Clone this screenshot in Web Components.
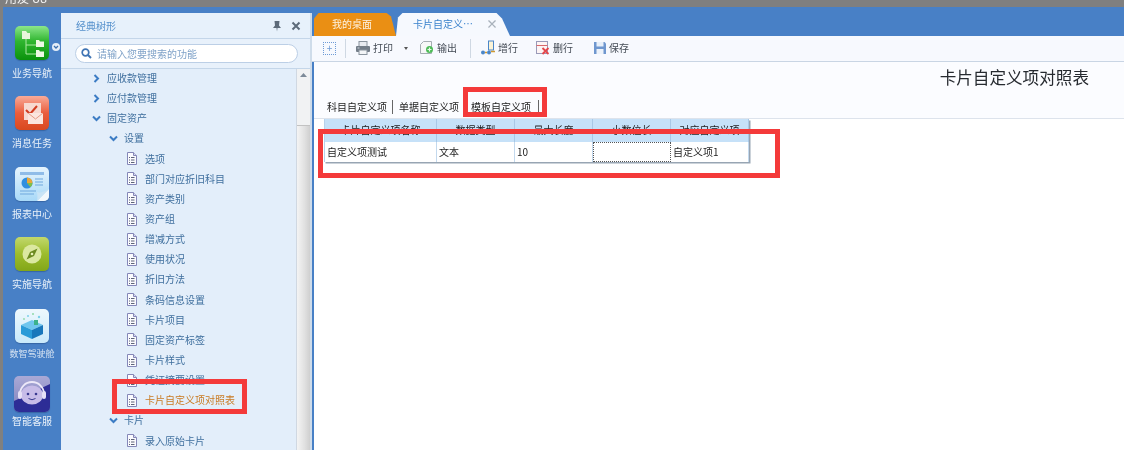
<!DOCTYPE html>
<html lang="zh">
<head>
<meta charset="utf-8">
<title>卡片自定义项对照表</title>
<style>
  html, body { margin: 0; height: 100%; overflow: hidden; background: #808080; }
</style>
</head>
<body>
<u8-shell>
  <u8-rail slot="rail">
    <rail-item icon="nav" drop>业务导航</rail-item>
    <rail-item icon="msg">消息任务</rail-item>
    <rail-item icon="report">报表中心</rail-item>
    <rail-item icon="compass">实施导航</rail-item>
    <rail-item icon="cube" small style="padding-top:2px;box-sizing:border-box">数智驾驶舱</rail-item>
    <rail-item icon="service" style="margin-top:-1.500px">智能客服</rail-item>
  </u8-rail>
  <tree-panel slot="tree">
    <tree-row level="1" kind="closed">应收款管理</tree-row>
    <tree-row level="1" kind="closed">应付款管理</tree-row>
    <tree-row level="1" kind="open">固定资产</tree-row>
    <tree-row level="2" kind="open">设置</tree-row>
    <tree-row level="3" kind="doc">选项</tree-row>
    <tree-row level="3" kind="doc">部门对应折旧科目</tree-row>
    <tree-row level="3" kind="doc">资产类别</tree-row>
    <tree-row level="3" kind="doc">资产组</tree-row>
    <tree-row level="3" kind="doc">增减方式</tree-row>
    <tree-row level="3" kind="doc">使用状况</tree-row>
    <tree-row level="3" kind="doc">折旧方法</tree-row>
    <tree-row level="3" kind="doc">条码信息设置</tree-row>
    <tree-row level="3" kind="doc">卡片项目</tree-row>
    <tree-row level="3" kind="doc">固定资产标签</tree-row>
    <tree-row level="3" kind="doc">卡片样式</tree-row>
    <tree-row level="3" kind="doc">凭证摘要设置</tree-row>
    <tree-row level="3" kind="doc" active>卡片自定义项对照表</tree-row>
    <tree-row level="2" kind="open">卡片</tree-row>
    <tree-row level="3" kind="doc">录入原始卡片</tree-row>
  </tree-panel>
  <main-pane slot="main"></main-pane>
</u8-shell>
<red-mark style="left:112px;top:379px;width:135px;height:35px"></red-mark>
<red-mark style="left:463px;top:87px;width:84px;height:30px"></red-mark>
<red-mark style="left:318px;top:129px;width:462px;height:49px"></red-mark>

<script>
const FONT = '"Noto Sans CJK SC", "Noto Sans", sans-serif';

const RAIL_ICONS = {
  nav: `<svg viewBox="0 0 34 34" width="34" height="34">
    <defs><linearGradient id="g" x1="0" y1="0" x2="0" y2="1"><stop offset="0" stop-color="#8ce68a"/><stop offset=".45" stop-color="#2fb52f"/><stop offset="1" stop-color="#0a920c"/></linearGradient></defs>
    <rect width="34" height="34" rx="5" fill="url(#g)"/>
    <path d="M11 12v16h10M11 19h10" fill="none" stroke="#a9e8a0" stroke-width="1"/>
    <path d="M7 5h4l1.500 2H15v6H7z" fill="#e8f6dc"/>
    <path d="M21 14h3l1 1.500h4V21h-8z" fill="#eef8e4"/>
    <path d="M21 24h3l1 1.500h4V31h-8z" fill="#eef8e4"/>
  </svg>`,
  msg: `<svg viewBox="0 0 34 34" width="34" height="34">
    <defs><linearGradient id="g" x1="0" y1="0" x2="0" y2="1"><stop offset="0" stop-color="#f9ab98"/><stop offset=".5" stop-color="#ea5d3d"/><stop offset="1" stop-color="#d9481f"/></linearGradient></defs>
    <rect width="34" height="34" rx="5" fill="url(#g)"/>
    <rect x="9" y="7" width="17" height="17" fill="#f7d9d0"/>
    <path d="M11 14l4 4 7-8" fill="none" stroke="#d23c20" stroke-width="2"/>
    <rect x="13" y="17" width="15" height="11" fill="#fbe6de"/>
    <path d="M13 17l7.500 6 7.500-6" fill="none" stroke="#e59c86" stroke-width="1"/>
  </svg>`,
  report: `<svg viewBox="0 0 34 34" width="34" height="34">
    <defs><linearGradient id="g" x1="0" y1="0" x2="0" y2="1"><stop offset="0" stop-color="#e6f4fd"/><stop offset="1" stop-color="#a8d9f8"/></linearGradient></defs>
    <rect width="34" height="34" rx="5" fill="url(#g)"/>
    <rect x="5" y="5" width="24" height="3" fill="#8fbce8"/>
    <circle cx="12" cy="16" r="5.500" fill="#2f8fe0"/>
    <path d="M12 16v-5.500a5.500 5.500 0 0 1 5.500 5.500z" fill="#e9a63a"/>
    <path d="M12 16h5.500a5.500 5.500 0 0 1-2 4.200z" fill="#7fbf4a"/>
    <path d="M20 12h8M20 15h8M20 18h8M5 24h16M5 27h14" stroke="#6ea8de" stroke-width="1.200"/>
    <path d="M22 34l12-12v7a5 5 0 0 1-5 5z" fill="#f2f8fc"/>
    <path d="M22 34c1-5 0-7 0-9 3 1 7 0 12-3z" fill="#c9e4f6"/>
  </svg>`,
  compass: `<svg viewBox="0 0 34 34" width="34" height="34">
    <defs><linearGradient id="g" x1="0" y1="0" x2="0" y2="1"><stop offset="0" stop-color="#c2d86c"/><stop offset=".5" stop-color="#9cbc2c"/><stop offset="1" stop-color="#82a618"/></linearGradient></defs>
    <rect width="34" height="34" rx="5" fill="url(#g)"/>
    <circle cx="17" cy="17" r="9.500" fill="#dbe8a0"/>
    <path d="M22.500 11.500l-3.500 7.500-7.500 3.500 3.500-7.500z" fill="#6c8a20"/>
    <circle cx="17" cy="17" r="1.300" fill="#e8f2b8"/>
  </svg>`,
  cube: `<svg viewBox="0 0 34 34" width="34" height="34">
    <defs><linearGradient id="g" x1="0" y1="0" x2="0" y2="1"><stop offset="0" stop-color="#eef8fd"/><stop offset="1" stop-color="#c9e9fa"/></linearGradient></defs>
    <rect width="34" height="34" rx="5" fill="url(#g)"/>
    <path d="M6 16l11-5 11 5-11 5z" fill="#6fc6ee"/>
    <path d="M6 16v9l11 5v-9z" fill="#2a9bd8"/>
    <path d="M28 16v9l-11 5v-9z" fill="#1877bb"/>
    <rect x="19" y="11" width="4" height="5" fill="#3cb28c"/>
    <circle cx="13" cy="7" r="1" fill="#7ccfe8"/><circle cx="18" cy="5" r="1" fill="#8fd8a8"/>
    <circle cx="24" cy="8" r="1.200" fill="#7ccfe8"/><circle cx="9" cy="10" r=".9" fill="#8fd8a8"/>
  </svg>`,
  service: `<svg viewBox="0 0 36 36" width="36" height="36">
    <defs><linearGradient id="g" x1="0" y1="0" x2="0" y2="1"><stop offset="0" stop-color="#a9a9d6"/><stop offset="1" stop-color="#8080bc"/></linearGradient></defs>
    <rect width="36" height="36" rx="5" fill="url(#g)"/>
    <path d="M0 25L36 8v23a5 5 0 0 1-5 5H5a5 5 0 0 1-5-5z" fill="#2d2d96"/>
    <ellipse cx="18" cy="19" rx="11" ry="9.500" fill="#c7bce8"/>
    <path d="M6 18a12 12 0 0 1 24 0" fill="none" stroke="#ece8f8" stroke-width="1.800"/>
    <rect x="4" y="15" width="4" height="8" rx="2" fill="#e6e0f6"/><rect x="28" y="15" width="4" height="8" rx="2" fill="#e6e0f6"/>
    <circle cx="14" cy="18" r="1.300" fill="#3a3a90"/><circle cx="22" cy="18" r="1.300" fill="#3a3a90"/>
    <path d="M14.500 22.500q3.500 2.500 7 0" fill="none" stroke="#3a3a90" stroke-width="1"/>
  </svg>`
};

const TOOL_ICONS = {
  print: `<svg viewBox="0 0 16 16" width="16" height="16"><rect x="4" y="1.500" width="8" height="5" fill="#e8ebf0" stroke="#8a949e"/><rect x="1" y="6" width="14" height="6" rx="1" fill="#737d88"/><rect x="4" y="10" width="8" height="4.500" fill="#f3f5f7" stroke="#8a949e"/><path d="M2.500 8h2" stroke="#d3dae0"/></svg>`,
  out: `<svg viewBox="0 0 16 16" width="16" height="16"><path d="M4.500 1.500h8v12h-11v-9z" fill="#f7f8f8" stroke="#a5adb2"/><circle cx="10.500" cy="9.500" r="3.500" fill="#4dbb57"/><path d="M8.500 9.500h4M10.500 7.500v4" stroke="#e9f9e9" stroke-width="1.200"/></svg>`,
  add: `<svg viewBox="0 0 16 16" width="16" height="16"><rect x="8.500" y="1" width="5" height="9" fill="#fbf3d6" stroke="#4a86c8"/><circle cx="3" cy="12.500" r="2" fill="#4a86c8"/><circle cx="9" cy="12.500" r="2" fill="#4a86c8"/><path d="M5 12.500h2M11 11.500h4" stroke="#d09a32" stroke-width="1.300"/></svg>`,
  del: `<svg viewBox="0 0 16 16" width="16" height="16"><rect x="1.500" y="1.500" width="11" height="12" fill="#fdf4f4" stroke="#9a9ab8"/><path d="M1.500 5.500h11" stroke="#d9686a"/><path d="M7.500 8l6 6M13.500 8l-6 6" stroke="#e4464a" stroke-width="1.800"/></svg>`,
  save: `<svg viewBox="0 0 14 14" width="14" height="14"><path d="M1 1h10.500L13 2.500V13H1z" fill="#6f97cf"/><rect x="3.500" y="1" width="7" height="4.500" fill="#e8f0fa"/><rect x="3.500" y="8" width="7" height="5" fill="#eef3fa"/></svg>`
};

class U8Shell extends HTMLElement {
    connectedCallback() {
        this.attachShadow({ mode: 'open' });
        this.shadowRoot.innerHTML = `
            <style>
                :host {
                    display: flex;
                    flex-direction: column;
                    width: 1124px;
                    height: 450px;
                    overflow: hidden;
                    font: 10px/14px ${FONT};
                    filter: blur(0.35px);
                }
                .top {
                    height: 6.500px;
                    flex: none;
                    overflow: hidden;
                    background: #7f7f7f;
                    color: #f4f4f4;
                    font-size: 12px;
                    line-height: 14px;
                    padding-left: 5px;
                }
                .top span { display: block; margin-top: -9px; }
                .body {
                    flex: 1;
                    min-height: 0;
                    display: flex;
                    margin-left: 3px;
                    background: #4880c6;
                }
            </style>
            <div class="top"><span>用友 U8</span></div>
            <div class="body">
                <slot name="rail"></slot>
                <slot name="tree"></slot>
                <slot name="main"></slot>
            </div>
        `;
    }
}

class U8Rail extends HTMLElement {
    connectedCallback() {
        this.attachShadow({ mode: 'open' });
        this.shadowRoot.innerHTML = `
            <style>
                :host {
                    display: flex;
                    flex-direction: column;
                    flex: none;
                    width: 58px;
                    padding-top: 19.500px;
                    box-sizing: border-box;
                }
            </style>
            <slot></slot>
        `;
    }
}

class RailItem extends HTMLElement {
    connectedCallback() {
        const icon = this.getAttribute('icon');
        const small = this.hasAttribute('small');
        const drop = this.hasAttribute('drop');
        const labelGap = icon === 'service' ? 2 : small ? 4 : 6;
        this.attachShadow({ mode: 'open' });
        this.shadowRoot.innerHTML = `
            <style>
                :host {
                    display: flex;
                    flex-direction: column;
                    align-items: center;
                    position: relative;
                    height: 70.300px;
                    color: ${small ? '#d5e2f2' : '#e8f0f9'};
                    font-size: ${small ? '9px' : '10px'};
                }
                .ico { display: block; border-radius: 5px; box-shadow: 0 1px 1px rgba(20,50,100,.35); }
                svg { display: block; }
                .label { margin-top: ${labelGap}px; white-space: nowrap; }
                .drop {
                    position: absolute;
                    left: 49px;
                    top: 17px;
                    width: 8px;
                    height: 8px;
                    border-radius: 50%;
                    background: #e4edf7;
                }
                .drop svg { width: 8px; height: 8px; }
            </style>
            <span class="ico">${RAIL_ICONS[icon]}</span>
            <span class="label"><slot></slot></span>
            ${drop ? '<span class="drop"><svg viewBox="0 0 8 8"><path d="M2 3l2 2 2-2" fill="none" stroke="#3b6fae" stroke-width="1.300"/></svg></span>' : ''}
        `;
    }
}

class TreePanel extends HTMLElement {
    connectedCallback() {
        this.attachShadow({ mode: 'open' });
        this.shadowRoot.innerHTML = `
            <style>
                :host {
                    display: flex;
                    flex-direction: column;
                    flex: none;
                    width: 251px;
                    margin-top: 6.500px;
                    background: #e3eefa;
                    border-right: 2px solid #cfdcea;
                    box-sizing: border-box;
                }
                .head {
                    height: 25px;
                    flex: none;
                    display: flex;
                    align-items: center;
                    padding: 0 9px 0 15px;
                    background: #e7f1fb;
                    border-bottom: 1px solid #c4d6e9;
                    color: #5590cc;
                }
                .head span { flex: 1; }
                .head svg { display: block; margin-left: 8px; }
                .search {
                    height: 29px;
                    flex: none;
                    display: flex;
                    align-items: center;
                    padding: 0 12px 0 14px;
                    background: #e8f1fb;
                    border-bottom: 1px solid #c4d6e9;
                }
                .pill {
                    flex: 1;
                    height: 19px;
                    display: flex;
                    align-items: center;
                    gap: 5px;
                    padding-left: 5px;
                    background: #fff;
                    border: 1px solid #bccfe6;
                    border-radius: 10px;
                    box-sizing: border-box;
                    color: #7fa2c8;
                }
                .tree {
                    flex: 1;
                    min-height: 0;
                    display: flex;
                }
                .rows { flex: 1; min-width: 0; overflow: hidden; border-right: 1px solid #d0d8e2; }
                .rows slot { display: block; margin-top: -1px; }
                .bar {
                    width: 13px;
                    flex: none;
                    display: flex;
                    flex-direction: column;
                    background: #f1f2f3;
                }
                .arrow { height: 56px; flex: none; display: flex; justify-content: center; padding-top: 4px; box-sizing: border-box; }
                .thumb {
                    flex: 1;
                    background: linear-gradient(90deg, #f4f4f4, #e0e0e0 60%, #cfcfcf);
                    border-top: 1px solid #c2c2c2;
                }
            </style>
            <div class="head">
                <span>经典树形</span>
                <svg width="12" height="12" viewBox="0 0 12 12"><path d="M3.500 1h5L8 5.500 10 8H6.500L6 11.500 5.500 8H2l2-2.500z" fill="#5d6b7a"/></svg>
                <svg width="10" height="10" viewBox="0 0 10 10"><path d="M1.500 1.500l7 7M8.500 1.500l-7 7" stroke="#5d6b7a" stroke-width="2"/></svg>
            </div>
            <div class="search">
                <div class="pill">
                    <svg width="11" height="11" viewBox="0 0 11 11"><circle cx="4.500" cy="4.500" r="3.300" fill="none" stroke="#3f74b4" stroke-width="1.700"/><path d="M7 7l3 3" stroke="#3f74b4" stroke-width="2"/></svg>
                    <span>请输入您要搜索的功能</span>
                </div>
            </div>
            <div class="tree">
                <div class="rows"><slot></slot></div>
                <div class="bar">
                    <div class="arrow"><svg width="7" height="4" viewBox="0 0 7 4"><path d="M3.500 0L7 4H0z" fill="#7d8a98"/></svg></div>
                    <div class="thumb"></div>
                </div>
            </div>
        `;
    }
}

class TreeRow extends HTMLElement {
    connectedCallback() {
        const level = Number(this.getAttribute('level'));
        const kind = this.getAttribute('kind');
        const pad = { 1: 31, 2: 48, 3: 65 }[level];
        let mark = '';
        if (kind === 'closed') {
            mark = '<svg width="9" height="9" viewBox="0 0 9 9"><path d="M2.500 1L6 4.500 2.500 8" fill="none" stroke="#3c7cc4" stroke-width="2"/></svg>';
        } else if (kind === 'open') {
            mark = '<svg width="9" height="9" viewBox="0 0 9 9"><path d="M1 2.500L4.500 6 8 2.500" fill="none" stroke="#3c7cc4" stroke-width="2"/></svg>';
        } else {
            mark = `<svg width="12" height="13" viewBox="0 0 12 13"><path d="M1.500.5h6l3 3v9h-9z" fill="#fbfbfe" stroke="#8487b8"/><path d="M7.500.5v3h3" fill="#d9dbee" stroke="#8487b8"/><path d="M3 5.500h1M5 5.500h3.500M3 8h1M5 8h3.500M3 10.500h1M5 10.500h3.500" stroke="#5d6378"/></svg>`;
        }
        const gap = level === 3 ? 7 : 6;
        this.attachShadow({ mode: 'open' });
        this.shadowRoot.innerHTML = `
            <style>
                :host {
                    display: flex;
                    align-items: center;
                    height: 20.150px;
                    padding-left: ${pad}px;
                    gap: ${gap}px;
                    color: ${this.hasAttribute('active') ? '#c97a22' : '#3f6f9e'};
                    white-space: nowrap;
                }
                svg { display: block; flex: none; }
            </style>
            ${mark}<span><slot></slot></span>
        `;
    }
}

class DocTabs extends HTMLElement {
    connectedCallback() {
        this.attachShadow({ mode: 'open' });
        this.shadowRoot.innerHTML = `
            <style>
                :host {
                    display: flex;
                    flex: none;
                    height: 23.500px;
                    margin-top: 6px;
                    align-items: stretch;
                    padding-left: 2px;
                }
                .tab {
                    display: flex;
                    align-items: center;
                    box-sizing: border-box;
                    white-space: nowrap;
                }
                .home {
                    width: 82px;
                    padding-left: 18px;
                    background: #ea8f14;
                    color: #fdf3e2;
                    clip-path: polygon(0 100%, 0 6px, 5px 0, 72px 0, 77px 4px, 82px 100%);
                }
                .cur {
                    width: 114px;
                    padding-left: 17px;
                    background: #f6f9fe;
                    color: #3a82cc;
                    clip-path: polygon(0 100%, 2px 5px, 7px 0, 100px 0, 106px 6px, 114px 100%);
                    gap: 13px;
                }
                .x { color: #a9b2bc; font-size: 12px; font-weight: 700; }
            </style>
            <div class="tab home">我的桌面</div>
            <div class="tab cur"><span>卡片自定义…</span><span class="x">×</span></div>
        `;
    }
}

class ToolBtn extends HTMLElement {
    connectedCallback() {
        this.attachShadow({ mode: 'open' });
        this.shadowRoot.innerHTML = `
            <style>
                :host {
                    display: flex;
                    align-items: center;
                    gap: 2px;
                    color: #444b55;
                    white-space: nowrap;
                }
                svg { display: block; }
            </style>
            ${TOOL_ICONS[this.getAttribute('icon')]}<slot></slot>
        `;
    }
}

class ToolBar extends HTMLElement {
    connectedCallback() {
        this.attachShadow({ mode: 'open' });
        this.shadowRoot.innerHTML = `
            <style>
                :host {
                    display: flex;
                    flex: none;
                    align-items: center;
                    height: 25.500px;
                    padding-left: 11px;
                    background: #f7f9fe;
                    border-bottom: 1px solid #c9d5e4;
                    box-sizing: border-box;
                }
                .add {
                    width: 13px;
                    height: 13px;
                    box-sizing: border-box;
                    border: 1px dotted #6e9bd6;
                    color: #6e9bd6;
                    display: flex;
                    align-items: center;
                    justify-content: center;
                    font-size: 10px;
                    line-height: 1;
                }
                .sep { width: 1px; height: 19px; background: #cfd8e3; }
                .caret { width: 0; height: 0; border: 2.500px solid transparent; border-top: 3px solid #555; border-bottom: 0; }
            </style>
            <span class="add">+</span>
            <span class="sep" style="margin:0 9px 0 9px"></span>
            <tool-btn icon="print">打印</tool-btn>
            <span class="caret" style="margin:0 11px 0 11px"></span>
            <tool-btn icon="out">输出</tool-btn>
            <span class="sep" style="margin:0 9px 0 13px"></span>
            <tool-btn icon="add">增行</tool-btn>
            <tool-btn icon="del" style="margin-left:17px">删行</tool-btn>
            <tool-btn icon="save" style="margin-left:20px">保存</tool-btn>
        `;
    }
}

class SubTabs extends HTMLElement {
    connectedCallback() {
        this.attachShadow({ mode: 'open' });
        this.shadowRoot.innerHTML = `
            <style>
                :host {
                    display: flex;
                    align-items: center;
                    height: 20px;
                    color: #222;
                    white-space: nowrap;
                }
                .sep { width: 1px; height: 14px; background: #666; }
            </style>
            <span>科目自定义项</span>
            <span class="sep" style="margin:0 6px 0 5px"></span>
            <span>单据自定义项</span>
            <span style="margin-left:12px">模板自定义项</span>
            <span class="sep" style="margin-left:7px"></span>
        `;
    }
}

class FieldTable extends HTMLElement {
    connectedCallback() {
        const heads = ['卡片自定义项名称', '数据类型', '最大长度', '小数位长', '对应自定义项'];
        const cells = ['自定义项测试', '文本', '10', '', '自定义项1'];
        this.attachShadow({ mode: 'open' });
        this.shadowRoot.innerHTML = `
            <style>
                :host {
                    display: grid;
                    grid-template-columns: 112px 78px 78px 78px 78px;
                    grid-template-rows: 23px 20px;
                    width: max-content;
                    color: #222;
                    border-left: 1px solid #b7d2ec;
                    box-shadow: 1.500px 1.500px 0 #98a5b3;
                    background: #fff;
                }
                .h {
                    background: #c6e1f8;
                    border-right: 1px solid #a9c8e6;
                    text-align: center;
                    padding-top: 4px;
                    box-sizing: border-box;
                }
                .c {
                    display: flex;
                    align-items: center;
                    padding-left: 2px;
                    border-right: 1px solid #c3d9ee;
                    box-sizing: border-box;
                }
                .c:nth-child(6) { padding-left: 4px; }
                .c:nth-child(10) { padding-left: 3px; }
                .focus { border: 1px dotted #555; background: #fff; }
            </style>
            ${heads.map(h => `<div class="h">${h}</div>`).join('')}
            ${cells.map(c => `<div class="c${c === '' ? ' focus' : ''}">${c}</div>`).join('')}
        `;
    }
}

class MainPane extends HTMLElement {
    connectedCallback() {
        this.attachShadow({ mode: 'open' });
        this.shadowRoot.innerHTML = `
            <style>
                :host {
                    display: flex;
                    flex-direction: column;
                    flex: 1;
                    min-width: 0;
                }
                .page {
                    flex: 1;
                    min-height: 0;
                    background: #fff;
                    margin-left: 2px;
                }
                .band {
                    height: 57px;
                    box-sizing: border-box;
                    background: #fbfcff;
                    border-bottom: 1px solid #dde3ec;
                    display: flex;
                    flex-direction: column;
                }
                h1 {
                    margin: 3px 0 0;
                    height: 24px;
                    font: 400 16.600px/24px ${FONT};
                    color: #262a30;
                    text-align: right;
                    padding-right: 35px;
                }
                sub-tabs { margin: 8px 0 0 13px; }
                field-table { margin-left: 10px; }
            </style>
            <doc-tabs></doc-tabs>
            <tool-bar></tool-bar>
            <div class="page">
                <div class="band">
                    <h1>卡片自定义项对照表</h1>
                    <sub-tabs></sub-tabs>
                </div>
                <field-table></field-table>
            </div>
        `;
    }
}

class RedMark extends HTMLElement {
    connectedCallback() {
        this.attachShadow({ mode: 'open' });
        this.shadowRoot.innerHTML = `
            <style>
                :host {
                    display: block;
                    position: absolute;
                    box-sizing: border-box;
                    border: 5px solid #f43a3a;
                    filter: blur(0.35px);
                }
            </style>
        `;
    }
}

customElements.define('u8-shell', U8Shell);
customElements.define('u8-rail', U8Rail);
customElements.define('rail-item', RailItem);
customElements.define('tree-panel', TreePanel);
customElements.define('tree-row', TreeRow);
customElements.define('doc-tabs', DocTabs);
customElements.define('tool-btn', ToolBtn);
customElements.define('tool-bar', ToolBar);
customElements.define('sub-tabs', SubTabs);
customElements.define('field-table', FieldTable);
customElements.define('main-pane', MainPane);
customElements.define('red-mark', RedMark);
</script>
</body>
</html>
